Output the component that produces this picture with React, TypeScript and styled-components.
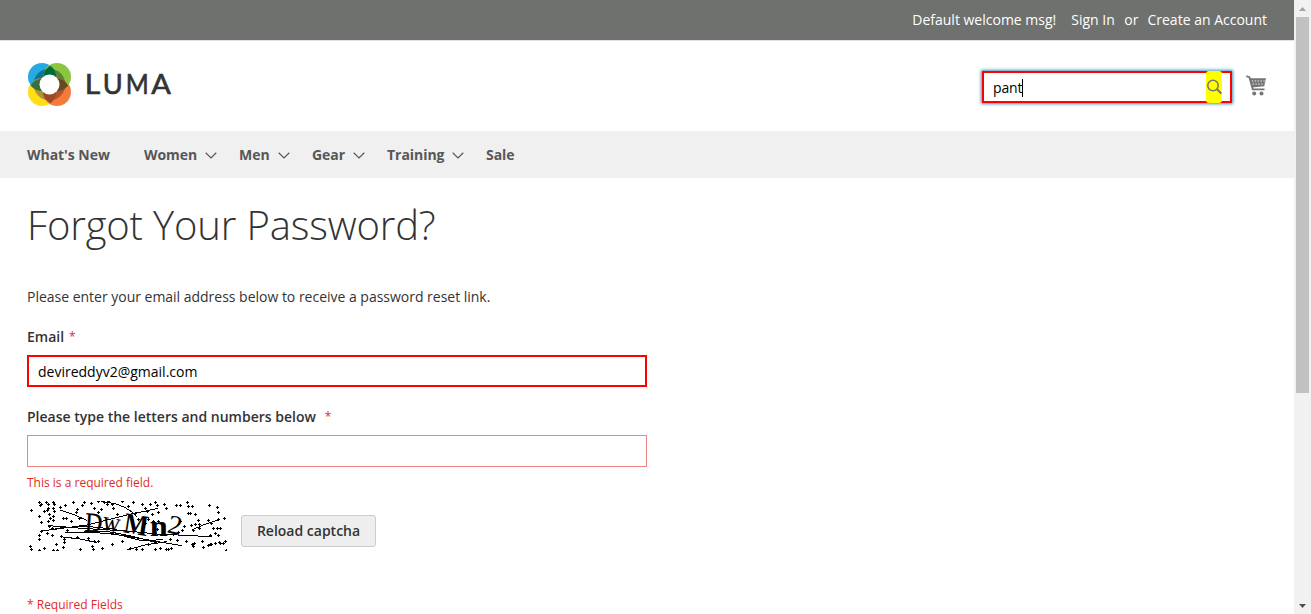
import React from "react";
import styled, { createGlobalStyle } from "styled-components";

const Global = createGlobalStyle`
  * { box-sizing: border-box; }
  body { margin: 0; background: #fff; font-family: "Open Sans", "Helvetica Neue", sans-serif; font-size: 14px; color: #333; overflow: hidden; }
  svg { display: block; flex: none; }
`;
const Window = styled.div`display: flex; width: 1311px; height: 614px;`;
const Page = styled.div`width: 1294px; height: 614px; overflow: hidden;`;
const TopBar = styled.div`height: 41px; background: #6e716e; border-bottom: 1px solid #e2e2e2; display: flex; justify-content: flex-end; padding: 10px 27px 0 0; color: #fff; line-height: 20px;`;
const TopItem = styled.span<{ $gap?: number }>`margin-left: ${(p) => p.$gap ?? 0}px; white-space: nowrap;`;
const Header = styled.header`height: 90px; display: flex; justify-content: space-between; padding: 22px 27px 0;`;
const Tools = styled.div`display: flex; align-items: flex-start; padding-top: 8px;`;
const SearchBox = styled.div`width: 250px; height: 32px; border: 2px solid #f00; box-shadow: 0 0 3px 1px #4390bd; display: flex; justify-content: space-between; padding: 0 8px 0 9px; color: #000;`;
const Typed = styled.div`display: flex; align-items: center; line-height: 30px; padding-top: 1px; letter-spacing: -0.15px;`;
const Caret = styled.i`width: 1px; height: 18px; background: #000;`;
const SearchButton = styled.span`width: 16px; height: 32px; margin-top: -2px; background: #ff0; border-radius: 3px;`;
const Cart = styled.div`margin: 4px 0 0 14px; width: 21px; height: 22px;`;
const Nav = styled.nav`height: 47px; background: #f0f0f0; display: flex; align-items: center; padding-left: 27px; font-weight: 700; color: #575757;`;
const NavItem = styled.span<{ $width: number }>`width: ${(p) => p.$width}px; display: flex; align-items: center; gap: 8px; white-space: nowrap; letter-spacing: -0.04px; svg { margin-top: 2px; }`;
const Main = styled.main`padding: 21px 27px 0;`;
const Title = styled.h1`margin: 0; font-size: 40px; font-weight: 300; line-height: 52px; height: 88px; letter-spacing: -0.15px;`;
const Note = styled.p`margin: 0 0 20px; line-height: 20px; letter-spacing: -0.015px;`;
const FieldGroup = styled.div<{ $space?: number }>`margin-bottom: ${(p) => p.$space ?? 0}px;`;
const Label = styled.label<{ $gap: number }>`display: flex; gap: ${(p) => p.$gap}px; line-height: 20px; font-weight: 600; margin-bottom: 8px;`;
const Star = styled.span`color: #e02b27; font-size: 12px; font-weight: 400;`;
const Field = styled.div<{ $marked?: boolean }>`width: 620px; height: 32px; border: ${(p) => (p.$marked ? "2px solid #f00" : "1px solid #ed8380")}; padding-left: 9px; line-height: 29px; color: #000;`;
const ErrorText = styled.div`margin-top: 7px; color: #e02b27; font-size: 12px; line-height: 17px;`;
const CaptchaRow = styled.div`display: flex; align-items: flex-end; gap: 14px; height: 56px; svg { margin-bottom: -4px; }`;
const Reload = styled.button`width: 135px; height: 32px; padding: 0 0 2px; border: 1px solid #ccc; border-radius: 3px; background: #eee; font: 600 14px "Open Sans", sans-serif; color: #333;`;
const Required = styled.div`margin-top: 49px; color: #e02b27; font-size: 12px; line-height: 17px;`;
const Scroll = styled.div`width: 17px; height: 614px; background: #f1f1f1; display: flex; flex-direction: column; align-items: center;`;
const Thumb = styled.div`width: 13px; height: 376px; background: #c1c1c1; flex: none;`;
const ArrowCell = styled.div<{ $push?: boolean }>`height: 17px; margin-top: ${(p) => (p.$push ? "auto" : 0)}; display: flex; align-items: center;`;

const Chevron = () => <svg width="12" height="7" viewBox="0 0 12 7" fill="none" stroke="#575757" strokeWidth="1.2"><path d="M.7.8 6 6 11.3.8" /></svg>;

const Logo = () => (
  <svg width="148" height="44" viewBox="0 0 148 44">
    <defs>
      <clipPath id="tl"><circle cx="15" cy="14" r="14" /></clipPath>
      <clipPath id="tr"><circle cx="30" cy="14" r="14" /></clipPath>
      <clipPath id="bl"><circle cx="15" cy="29" r="14" /></clipPath>
      <clipPath id="br"><circle cx="30" cy="29" r="14" /></clipPath>
    </defs>
    <circle cx="15" cy="29" r="14" fill="#ffde17" />
    <circle cx="30" cy="29" r="14" fill="#f47b3c" />
    <circle cx="15" cy="14" r="14" fill="#27a9e1" />
    <circle cx="30" cy="14" r="14" fill="#8cc641" />
    <circle cx="22.5" cy="21.5" r="15.8" fill="#0c7498" clipPath="url(#tl)" />
    <circle cx="22.5" cy="21.5" r="15.8" fill="#56853a" clipPath="url(#tr)" />
    <circle cx="22.5" cy="21.5" r="15.8" fill="#a8953a" clipPath="url(#bl)" />
    <circle cx="22.5" cy="21.5" r="15.8" fill="#b5532c" clipPath="url(#br)" />
    <circle cx="29.3" cy="14" r="12.6" fill="#006b38" clipPath="url(#tl)" />
    <circle cx="15" cy="28.3" r="12.6" fill="#3a6f35" clipPath="url(#tl)" />
    <circle cx="30" cy="28.3" r="12.6" fill="#664b20" clipPath="url(#tr)" />
    <circle cx="29.3" cy="29" r="12.6" fill="#9d4924" clipPath="url(#bl)" />
    <circle cx="22.5" cy="21.5" r="10" fill="#fff" />
    <g fontFamily="Lato" fontSize="26" fill="#333" stroke="#333" strokeWidth=".6" lengthAdjust="spacingAndGlyphs">
      <text x="57.8" y="31" textLength="15.5" lengthAdjust="spacingAndGlyphs">L</text>
      <text x="75.8" y="31" textLength="20" lengthAdjust="spacingAndGlyphs">U</text>
      <text x="98.8" y="31" textLength="23" lengthAdjust="spacingAndGlyphs">M</text>
      <text x="124.3" y="31" textLength="19.6" lengthAdjust="spacingAndGlyphs">A</text>
    </g>
  </svg>
);

const Magnifier = () => (
  <svg width="16" height="32" viewBox="0 0 16 32" fill="none" stroke="#757575">
    <circle cx="7" cy="14.5" r="5.2" strokeWidth="1.5" />
    <path d="m11 18.3 4.2 4.2" strokeWidth="2" />
  </svg>
);

const CartIcon = () => (
  <svg width="21" height="22" viewBox="0 0 21 22" fill="none" stroke="#757575">
    <path d="M.3 1.2 3.4 2.2 6.7 14.3H18.5" strokeWidth="1.8" />
    <path d="M3.6 3.2H20L18.3 11.2 5.8 12.4z" fill="#757575" stroke="none" />
    <path d="M5.8 6h13M6.4 9h12" stroke="#fff" strokeWidth=".9" strokeDasharray="1.5 1.4" />
    <circle cx="8.2" cy="18.5" r="2" fill="#757575" stroke="none" />
    <circle cx="15.5" cy="18.5" r="2" fill="#757575" stroke="none" />
  </svg>
);

// Speckles of the captcha, in thirds of a pixel
const specks: number[][] = [
  [59,21],[65,27],[62,31],[80,22],[85,29],[101,22],[103,29],[34,46],[86,39],[101,39],[136,31],[160,22],[173,43],[188,31],[194,21],[215,26],[223,39],[83,46],[73,49],[57,65],[103,49],[121,36],[87,59],[101,64],[64,81],[85,79],[91,69],[101,77],[169,51],[131,71],[139,71],[154,79],[178,71],[64,109],[87,94],[96,101],[59,121],[83,114],[58,134],[96,121],[108,147],[125,124],[134,134],[132,142],[31,155],[35,162],[59,165],[99,166],[111,166],[73,159],[131,156],[181,162],[216,154],[143,107],[171,126],[206,129],[223,139],
  [236,19],[252,23],[264,19],[278,27],[244,42],[261,27],[306,19],[326,34],[341,21],[366,29],[376,39],[391,27],[411,31],[406,21],[416,51],[346,54],[381,49],[396,59],[281,39],[291,59],[234,51],[356,74],[386,74],[401,79],[416,79],[321,124],[236,139],[246,159],[278,149],[221,164],[331,159],[348,164],[366,162],[384,149],[406,164],[421,159],[306,139],[376,84],[411,104],[276,114],
  [432,27],[438,39],[470,31],[480,31],[502,22],[506,33],[516,33],[567,31],[592,37],[595,51],[504,56],[512,56],[526,57],[480,79],[492,94],[488,107],[515,91],[525,89],[535,77],[538,87],[538,101],[520,107],[565,77],[575,84],[595,74],[613,71],[580,99],[592,101],[600,101],[585,114],[595,121],[570,121],[450,134],[472,137],[498,139],[475,112],[460,117],[518,149],[522,146],[520,153],[547,139],[550,157],[565,152],[570,149],[575,147],[585,144],[598,141],[602,146],[610,144],[615,139],[445,164],[455,159],[438,164],[618,166],
];
const speckPath = specks.map(([x, y]) => `M${x - 4.5} ${y}h9M${x} ${y - 4.5}v9`).join("");

const Captcha = () => (
  <svg width="200" height="50" viewBox="21 18 600 150">
    <path d={speckPath} stroke="#000" strokeWidth="3" fill="none" shapeRendering="crispEdges" />
    <g fill="none" stroke="#000" strokeWidth="3" shapeRendering="crispEdges">
      <path d="M120 45 160 58 200 76M85 92 200 101 320 108 410 117 575 125M65 108 110 102 200 90 320 60 415 40M135 113Q235 108 330 125T485 152M120 125 180 132 232 143M243 20Q315 24 350 65M515 105 555 88 595 75M320 165 375 150 440 140M105 100 200 94 290 103M190 108 270 111 330 122 410 143M300 120 365 137 430 134" />
    </g>
    <g fontFamily="Liberation Serif" fill="#000">
      <text x="195" y="109" fontSize="80" stroke="#000" textLength="52" lengthAdjust="spacingAndGlyphs" transform="rotate(4 220 85)">D</text>
      <text x="247" y="108" fontSize="84" textLength="52" lengthAdjust="spacingAndGlyphs" transform="rotate(10 272 90)">w</text>
      <text x="312" y="118" fontSize="88" fontWeight="700" textLength="73" lengthAdjust="spacingAndGlyphs" transform="rotate(9 350 90)">M</text>
      <text x="389" y="124" fontSize="87" fontWeight="700" textLength="54" lengthAdjust="spacingAndGlyphs">n</text>
      <text x="444" y="117" fontSize="80" textLength="43" lengthAdjust="spacingAndGlyphs" transform="rotate(12 466 90)">2</text>
    </g>
  </svg>
);

const App = () => (
  <Window>
    <Global />
    <Page>
      <TopBar><TopItem>Default welcome msg!</TopItem><TopItem $gap={15}>Sign In</TopItem><TopItem $gap={9.5}>or</TopItem><TopItem $gap={9}>Create an Account</TopItem></TopBar>
      <Header>
        <Logo />
        <Tools>
          <SearchBox><Typed>pant<Caret /></Typed><SearchButton><Magnifier /></SearchButton></SearchBox>
          <Cart><CartIcon /></Cart>
        </Tools>
      </Header>
      <Nav>
        <NavItem $width={117}>What's New</NavItem>
        <NavItem $width={95}>Women<Chevron /></NavItem><NavItem $width={73}>Men<Chevron /></NavItem>
        <NavItem $width={75}>Gear<Chevron /></NavItem><NavItem $width={99}>Training<Chevron /></NavItem><NavItem $width={40}>Sale</NavItem>
      </Nav>
      <Main>
        <Title>Forgot Your Password?</Title>
        <Note>Please enter your email address below to receive a password reset link.</Note>
        <FieldGroup $space={20}>
          <Label $gap={5}>Email <Star>*</Star></Label>
          <Field $marked>devireddyv2@gmail.com</Field>
        </FieldGroup>
        <FieldGroup>
          <Label $gap={9}>Please type the letters and numbers below <Star>*</Star></Label>
          <Field />
          <ErrorText>This is a required field.</ErrorText>
        </FieldGroup>
        <CaptchaRow><Captcha /><Reload>Reload captcha</Reload></CaptchaRow>
        <Required>* Required Fields</Required>
      </Main>
    </Page>
    <Scroll><ArrowCell><svg width="7" height="4"><path d="M0 4 3.5 0 7 4z" fill="#a3a3a3" /></svg></ArrowCell><Thumb /><ArrowCell $push><svg width="7" height="4"><path d="M0 0h7L3.5 4z" fill="#505050" /></svg></ArrowCell></Scroll>
  </Window>
);
export default App;
